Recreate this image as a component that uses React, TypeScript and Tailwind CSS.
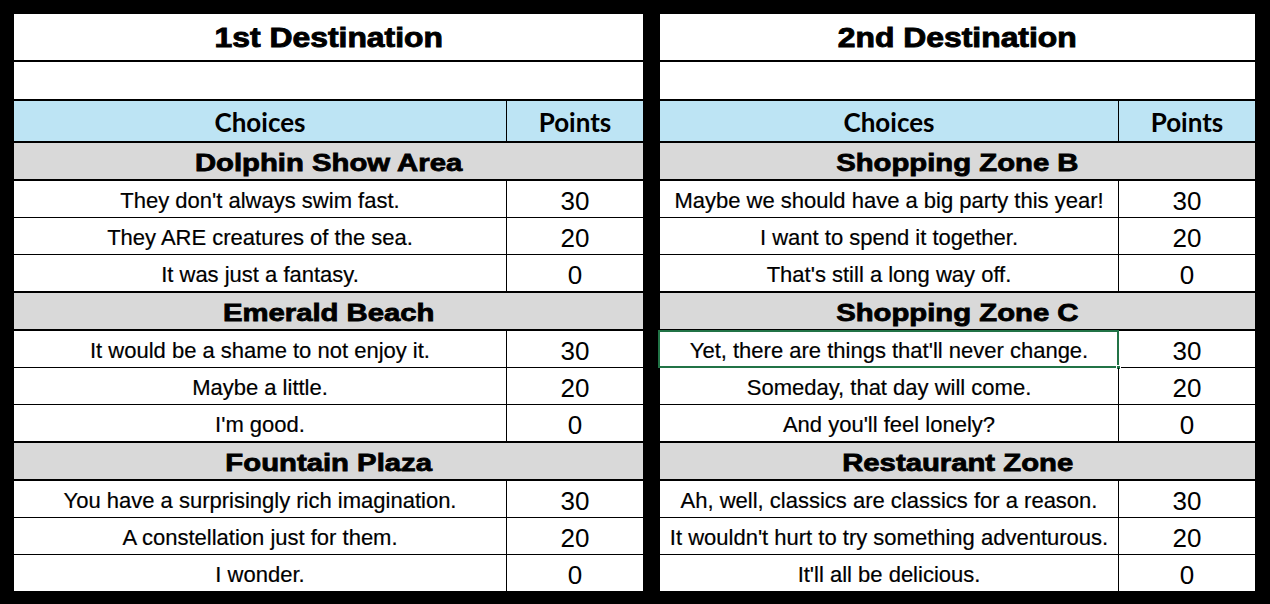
import React from 'react';

interface Choice {
  text: string;
  points: number;
}

interface Area {
  name: string;
  choices: Choice[];
}

interface Destination {
  title: string;
  choicesWidth: string;
  areas: Area[];
}

const destinations: Destination[] = [
  {
    title: '1st Destination',
    choicesWidth: 'w-[493px]',
    areas: [
      {
        name: 'Dolphin Show Area',
        choices: [
          { text: "They don't always swim fast.", points: 30 },
          { text: 'They ARE creatures of the sea.', points: 20 },
          { text: 'It was just a fantasy.', points: 0 }
        ]
      },
      {
        name: 'Emerald Beach',
        choices: [
          { text: 'It would be a shame to not enjoy it.', points: 30 },
          { text: 'Maybe a little.', points: 20 },
          { text: "I'm good.", points: 0 }
        ]
      },
      {
        name: 'Fountain Plaza',
        choices: [
          { text: 'You have a surprisingly rich imagination.', points: 30 },
          { text: 'A constellation just for them.', points: 20 },
          { text: 'I wonder.', points: 0 }
        ]
      }
    ]
  },
  {
    title: '2nd Destination',
    choicesWidth: 'w-[459px]',
    areas: [
      {
        name: 'Shopping Zone B',
        choices: [
          { text: 'Maybe we should have a big party this year!', points: 30 },
          { text: 'I want to spend it together.', points: 20 },
          { text: "That's still a long way off.", points: 0 }
        ]
      },
      {
        name: 'Shopping Zone C',
        choices: [
          { text: "Yet, there are things that'll never change.", points: 30 },
          { text: 'Someday, that day will come.', points: 20 },
          { text: "And you'll feel lonely?", points: 0 }
        ]
      },
      {
        name: 'Restaurant Zone',
        choices: [
          { text: 'Ah, well, classics are classics for a reason.', points: 30 },
          { text: "It wouldn't hurt to try something adventurous.", points: 20 },
          { text: "It'll all be delicious.", points: 0 }
        ]
      }
    ]
  }
];

const arial = "font-['Liberation_Sans',Arial,sans-serif]";
const calibri = "font-['Lato','Open_Sans',sans-serif]";

const DestinationTable: React.FC<{ dest: Destination; selected?: string }> = ({ dest, selected }) => {
  return (
    <div className={`flex-1 bg-white text-black ${arial}`}>
      <div className="h-[48px] border-b-2 border-black flex items-center justify-center pt-[2px]">
        <span className="inline-block scale-x-[1.18] text-[27px] font-bold [-webkit-text-stroke:0.9px_black]">
          {dest.title}
        </span>
      </div>
      <div className="h-[39px] border-b-2 border-black"></div>
      <div className="h-[42px] border-b-2 border-black flex bg-[#bde4f4]">
        <div className={`${dest.choicesWidth} shrink-0 border-r border-black flex items-center justify-center pt-[3px]`}>
          <span className={`${calibri} text-[26px] font-bold`}>Choices</span>
        </div>
        <div className="flex-1 flex items-center justify-center pt-[3px]">
          <span className={`${calibri} text-[26px] font-bold`}>Points</span>
        </div>
      </div>
      {dest.areas.map((area, ai) => (
        <div key={area.name}>
          <div className="h-[38px] border-b-2 border-black bg-[#d9d9d9] flex items-center justify-center pt-[3px]">
            <span className="inline-block scale-x-[1.22] text-[24px] font-bold [-webkit-text-stroke:0.8px_black]">
              {area.name}
            </span>
          </div>
          {area.choices.map((c, ci) => {
            const last = ci === area.choices.length - 1;
            const isLastTable = ai === dest.areas.length - 1 && last;
            return (
              <div
                key={c.text}
                className={`flex ${isLastTable ? 'h-[36px]' : last ? 'h-[38px] border-b-2 border-black' : 'h-[37px] border-b border-black'}`}
              >
                <div className={`${dest.choicesWidth} shrink-0 border-r border-black flex items-center justify-center relative pt-[3px]`}>
                  <span className="text-[22px] leading-none [-webkit-text-stroke:0.2px_black]">{c.text}</span>
                  {selected === c.text && (
                    <div className="absolute -left-[2px] -top-[1px] -right-[1px] -bottom-[1px] border-2 border-[#217346]">
                      <div className="absolute -right-[4px] -bottom-[4px] w-[5px] h-[5px] bg-[#217346] border border-white"></div>
                    </div>
                  )}
                </div>
                <div className="flex-1 flex items-center justify-center pt-[4px]">
                  <span className="text-[26px] leading-none">{c.points}</span>
                </div>
              </div>
            );
          })}
        </div>
      ))}
    </div>
  );
};

const App: React.FC = () => {
  return (
    <div className="w-[1270px] h-[604px] bg-black pt-[14px] pl-[14px] pr-[15px] flex gap-[17px]">
      <div className="w-[629px] h-[577px] flex">
        <DestinationTable dest={destinations[0]} />
      </div>
      <div className="w-[595px] h-[577px] flex">
        <DestinationTable dest={destinations[1]} selected="Yet, there are things that'll never change." />
      </div>
    </div>
  );
};

export default App;
